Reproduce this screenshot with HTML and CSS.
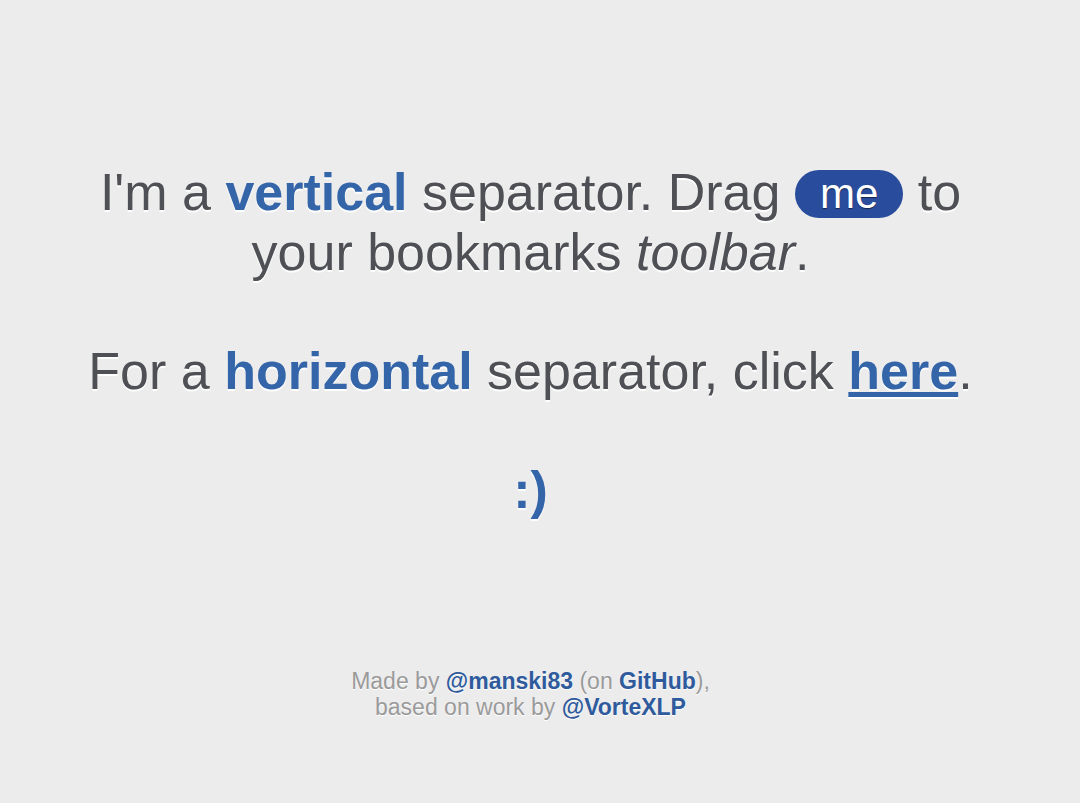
FILE: index.html
```html
<!DOCTYPE html>
<html>
<head>
<meta charset="utf-8">
<link rel="stylesheet" href="styles.css">
</head>
<body>
<main class="page">
  <p class="lead">I'm a <strong class="hl">vertical</strong> separator. Drag <a class="pill" href="#">me</a> to<br>your bookmarks <em>toolbar</em>.</p>
  <p class="lead">For a <strong class="hl">horizontal</strong> separator, click <a class="link" href="#">here</a>.</p>
  <p class="smile">:)</p>
  <footer class="foot">Made by <a href="#">@manski83</a> (on <a href="#">GitHub</a>),<br>based on work by <a href="#">@VorteXLP</a></footer>
</main>
</body>
</html>
```
FILE: styles.css
```css
html, body { margin: 0; padding: 0; }
body {
  background: #ececec;
  font-family: "Liberation Sans", Arial, sans-serif;
  color: #4f5055;
  width: 1080px;
  height: 803px;
  overflow: hidden;
}
.page {
  display: flex;
  flex-direction: column;
  align-items: center;
  text-align: center;
  padding: 162px 19px 0 0;
}
.lead {
  margin: 0 0 59px;
  font-size: 52px;
  line-height: 60px;
  text-shadow: 0 2px 1px #fff;
}
.hl { color: #3465a8; font-weight: bold; }
.lead em { font-style: italic; }
.pill {
  display: inline-block;
  background: #2a4c9c;
  color: #fff;
  text-decoration: none;
  border-radius: 24px;
  padding: 0 25px;
  font-size: 42px;
  line-height: 48px;
  vertical-align: 2px;
  text-shadow: 0 1px 1px #15264d;
}
.link { color: #3465a8; font-weight: bold; text-decoration: underline; }
.smile {
  margin: 0;
  font-size: 52px;
  line-height: 60px;
  font-weight: bold;
  color: #3465a8;
  text-shadow: 0 2px 1px #fff;
}
.foot {
  margin-top: 148px;
  font-size: 23px;
  line-height: 26px;
  color: #9a9a9a;
  text-shadow: 0 1px 1px #fff;
}
.foot a { color: #2f5b9c; font-weight: bold; text-decoration: none; }
```
